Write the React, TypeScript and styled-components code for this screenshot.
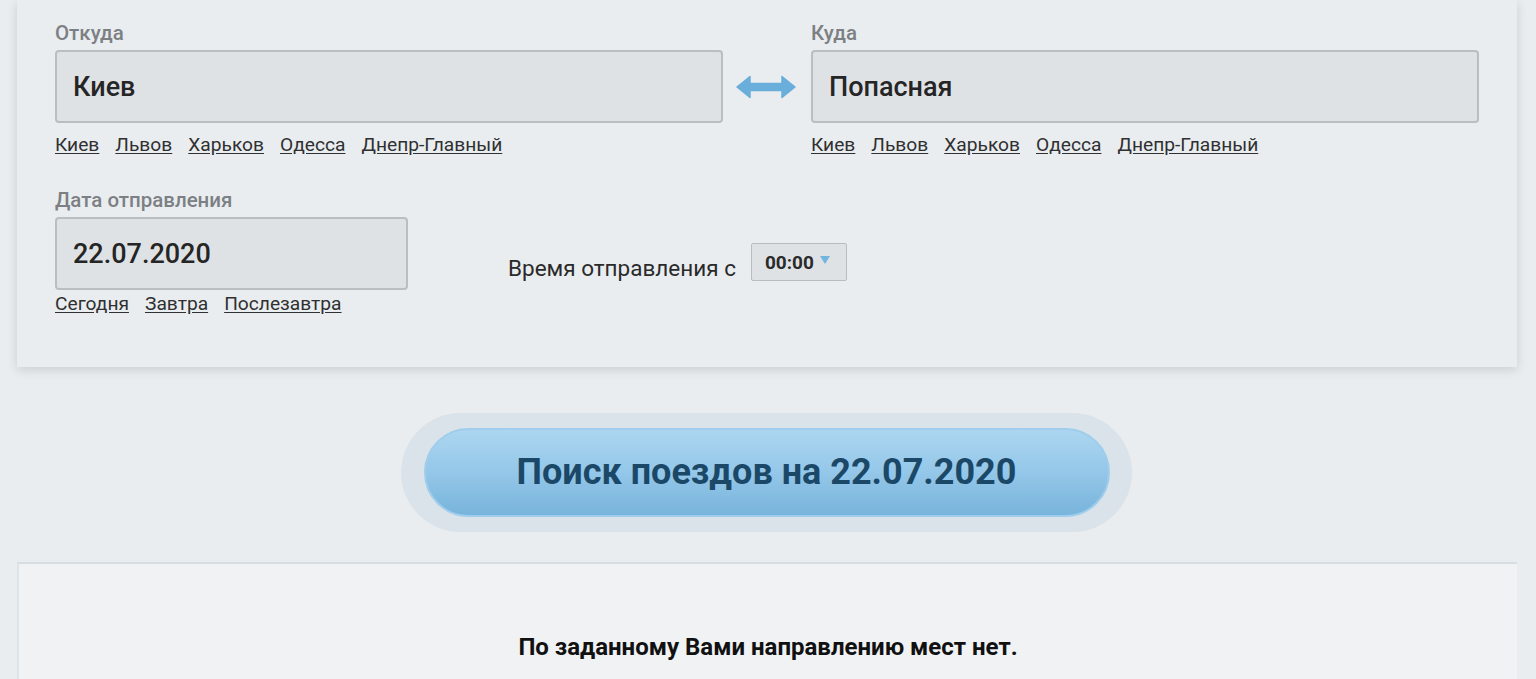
import React, { FC } from 'react';
import styled, { createGlobalStyle } from 'styled-components';

const GlobalStyle = createGlobalStyle`
  body {
    margin: 0;
    background: #e9edf0;
    font-family: Roboto, "Liberation Sans", sans-serif;
    color: #2a2a2a;
  }
`;

const Page = styled.div`
  padding: 0 19px 0 17px;
`;

const SearchCard = styled.section`
  background: #e9edf0;
  box-shadow: 0 3px 10px rgba(0, 0, 0, 0.13);
  padding: 22px 38px 52px;
`;

const StationsRow = styled.div`
  display: grid;
  grid-template-columns: 1fr 88px 1fr;
  align-items: start;
`;

const Field = styled.div`
  display: flex;
  flex-direction: column;
`;

const Label = styled.div`
  font-size: 20.5px;
  font-weight: 500;
  color: #7c8084;
  line-height: 22px;
  margin-bottom: 6px;
`;

const InputBox = styled.div<{ $width?: string }>`
  width: ${({ $width }) => $width || 'auto'};
  box-sizing: border-box;
  height: 73px;
  background: #dfe2e5;
  border: 2px solid #babec2;
  border-radius: 4px;
  display: flex;
  align-items: center;
  padding-left: 16px;
  font-size: 27px;
  font-weight: 500;
  color: #252525;
`;

const Links = styled.div<{ $offset: number }>`
  display: flex;
  gap: 16px;
  margin-top: ${({ $offset }) => $offset}px;
`;

const QuickLink = styled.a`
  font-size: 19.2px;
  color: #303030;
  text-decoration: underline;
  text-underline-offset: 2px;
  line-height: 22px;
  cursor: pointer;
`;

const SwapButton = styled.div`
  height: 73px;
  margin-top: 28px;
  display: flex;
  align-items: center;
  justify-content: center;
  padding-right: 2px;
`;

const DateRow = styled.div`
  display: flex;
  align-items: flex-start;
  margin-top: 33px;
`;

const TimeBlock = styled.div`
  display: flex;
  align-items: center;
  gap: 15px;
  margin-left: 100px;
  margin-top: 54px;
`;

const TimeLabel = styled.span`
  font-size: 22.5px;
  font-weight: 400;
  color: #2a2a2a;
  padding-top: 12px;
`;

const TimeSelect = styled.div`
  box-sizing: border-box;
  width: 96px;
  height: 38px;
  background: #dfe2e5;
  border: 1px solid #b9bdc1;
  border-radius: 2px;
  display: flex;
  align-items: center;
  padding-left: 13px;
  gap: 6px;
  font-size: 19px;
  font-weight: 700;
  color: #2a2a2a;
`;

const Caret = styled.span`
  width: 0;
  height: 0;
  border-left: 5px solid transparent;
  border-right: 5px solid transparent;
  border-top: 8px solid #72b6e0;
  margin-top: -4px;
`;

const ButtonArea = styled.div`
  display: flex;
  justify-content: center;
  margin-top: 46px;
  padding-right: 2px;
`;

const ButtonHalo = styled.div`
  background: #dae3ea;
  border-radius: 60px;
  padding: 15px 22px 15px 23px;
`;

const SearchButton = styled.button`
  width: 686px;
  height: 89px;
  border-radius: 45px;
  border: 2px solid #9fcdeb;
  background: linear-gradient(to bottom, #acd6f0 0%, #94c7e9 50%, #78b4db 100%);
  font-family: Roboto, "Liberation Sans", sans-serif;
  font-size: 36px;
  font-weight: 700;
  color: #1c4868;
  cursor: pointer;
  padding: 0 0 2px;
`;

const ResultCard = styled.section`
  margin-top: 30px;
  background: #f0f2f4;
  border-top: 2px solid #d6dde3;
  border-left: 2px solid #dde3e8;
  height: 140px;
  padding-top: 69px;
  box-sizing: border-box;
  text-align: center;
`;

const EmptyText = styled.p`
  margin: 0;
  font-size: 24px;
  font-weight: 700;
  color: #111;
`;

const SwapIcon: FC = () => (
  <svg width="60" height="24" viewBox="0 0 60 24">
    <path
      d="M1 12 L14 1.5 L14 8.5 L46 8.5 L46 1.5 L59 12 L46 22.5 L46 15.5 L14 15.5 L14 22.5 Z"
      fill="#6aaedb"
      stroke="#6aaedb"
      strokeWidth="1.5"
      strokeLinejoin="round"
    />
  </svg>
);

const cities = ['Киев', 'Львов', 'Харьков', 'Одесса', 'Днепр-Главный'];
const days = ['Сегодня', 'Завтра', 'Послезавтра'];

const StationField: FC<{ label: string; value: string }> = ({ label, value }) => (
  <Field>
    <Label>{label}</Label>
    <InputBox>{value}</InputBox>
    <Links $offset={11}>
      {cities.map((c) => (
        <QuickLink key={c}>{c}</QuickLink>
      ))}
    </Links>
  </Field>
);

const App: FC = () => (
  <>
    <GlobalStyle />
    <Page>
      <SearchCard>
        <StationsRow>
          <StationField label="Откуда" value="Киев" />
          <SwapButton>
            <SwapIcon />
          </SwapButton>
          <StationField label="Куда" value="Попасная" />
        </StationsRow>
        <DateRow>
          <Field>
            <Label>Дата отправления</Label>
            <InputBox $width="353px">22.07.2020</InputBox>
            <Links $offset={3}>
              {days.map((d) => (
                <QuickLink key={d}>{d}</QuickLink>
              ))}
            </Links>
          </Field>
          <TimeBlock>
            <TimeLabel>Время отправления с</TimeLabel>
            <TimeSelect>
              00:00
              <Caret />
            </TimeSelect>
          </TimeBlock>
        </DateRow>
      </SearchCard>
      <ButtonArea>
        <ButtonHalo>
          <SearchButton>Поиск поездов на 22.07.2020</SearchButton>
        </ButtonHalo>
      </ButtonArea>
      <ResultCard>
        <EmptyText>По заданному Вами направлению мест нет.</EmptyText>
      </ResultCard>
    </Page>
  </>
);

export default App;
